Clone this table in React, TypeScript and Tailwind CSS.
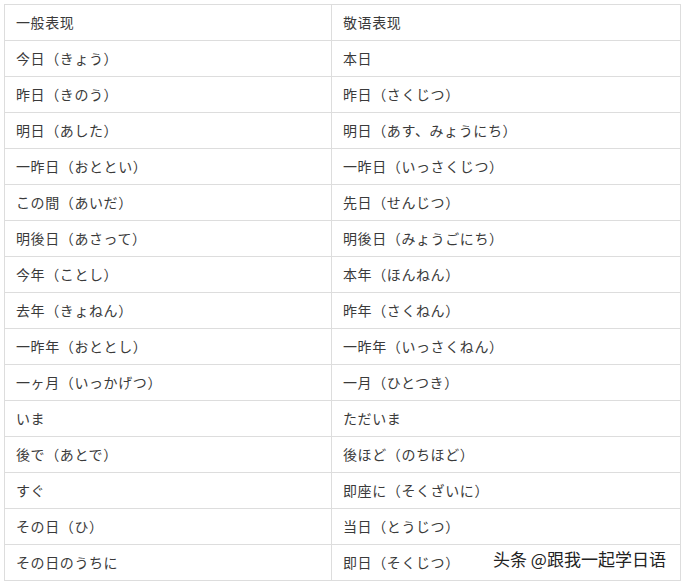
const rows: [string, string][] = [
  ['今日（きょう）', '本日'],
  ['昨日（きのう）', '昨日（さくじつ）'],
  ['明日（あした）', '明日（あす、みょうにち）'],
  ['一昨日（おととい）', '一昨日（いっさくじつ）'],
  ['この間（あいだ）', '先日（せんじつ）'],
  ['明後日（あさって）', '明後日（みょうごにち）'],
  ['今年（ことし）', '本年（ほんねん）'],
  ['去年（きょねん）', '昨年（さくねん）'],
  ['一昨年（おととし）', '一昨年（いっさくねん）'],
  ['一ヶ月（いっかげつ）', '一月（ひとつき）'],
  ['いま', 'ただいま'],
  ['後で（あとで）', '後ほど（のちほど）'],
  ['すぐ', '即座に（そくざいに）'],
  ['その日（ひ）', '当日（とうじつ）'],
  ['その日のうちに', '即日（そくじつ）'],
];

const cell = 'h-[36px] border border-[#dddddd] pl-[11px] text-left align-middle font-normal tracking-[0.6px]';

export default function App() {
  return (
    <div
      className="relative h-[582px] w-[685px] bg-white pl-[4px] pt-[4px] text-[14px] text-[#3a3a3a]"
      style={{ fontFamily: '"Noto Sans CJK SC", "Noto Sans CJK JP", sans-serif' }}
    >
      <table className="w-[677px] table-fixed border-collapse">
        <colgroup>
          <col className="w-[327px]" />
          <col />
        </colgroup>
        <thead>
          <tr>
            <th className={cell}>一般表现</th>
            <th className={cell}>敬语表现</th>
          </tr>
        </thead>
        <tbody>
          {rows.map(([plain, polite]) => (
            <tr key={plain}>
              <td className={cell}>{plain}</td>
              <td className={cell}>{polite}</td>
            </tr>
          ))}
        </tbody>
      </table>
      <div className="absolute left-[493px] top-[546px] text-[17px] text-[#222222] [text-shadow:0_0_2px_#fff,0_0_2px_#fff]">
        头条 @跟我一起学日语
      </div>
    </div>
  );
}
